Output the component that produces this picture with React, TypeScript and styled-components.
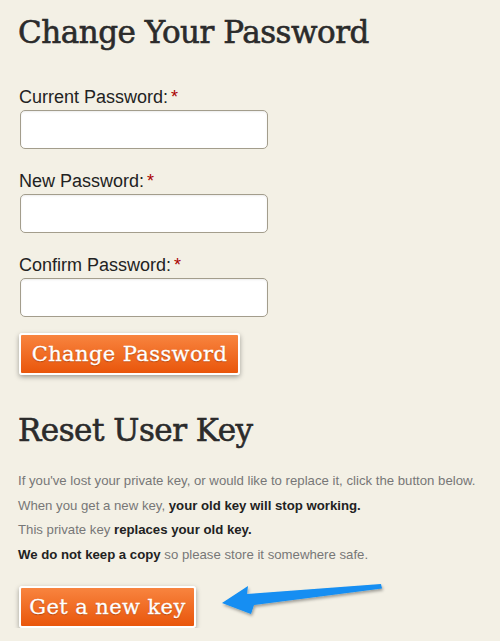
import styled, { createGlobalStyle } from 'styled-components';

const GlobalStyle = createGlobalStyle`
  html, body {
    margin: 0;
    padding: 0;
    background: #f3f0e5;
  }
`;

const Page = styled.div`
  padding: 12px 0 0 18px;
  font-family: 'Liberation Sans', Arial, sans-serif;
  color: #222;
`;

const Heading = styled.h1<{ $top?: number }>`
  font-family: 'DejaVu Serif', serif;
  font-weight: normal;
  font-size: 31px;
  letter-spacing: -0.5px;
  color: #2b2b2b;
  -webkit-text-stroke: 0.6px #2b2b2b;
  line-height: 40px;
  margin: ${(p) => p.$top ?? 0}px 0 0 0;
`;

const Form = styled.form`
  display: flex;
  flex-direction: column;
  margin-top: 35px;
`;

const Field = styled.div`
  display: flex;
  flex-direction: column;
  margin-bottom: 22px;
`;

const Label = styled.label`
  font-size: 18px;
  line-height: 20px;
  color: #222;
  padding-left: 1px;
  margin-bottom: 3px;
`;

const Star = styled.span`
  color: #a00;
  margin-left: 3px;
`;

const Input = styled.input`
  box-sizing: border-box;
  width: 248px;
  height: 39px;
  margin-left: 2px;
  border: 1px solid #a39d8c;
  border-radius: 5px;
  background: #fff;
  box-shadow: inset 0 1px 2px rgba(0, 0, 0, 0.08);
  outline: none;
`;

const OrangeButton = styled.button<{ $width: number }>`
  box-sizing: border-box;
  width: ${(p) => p.$width}px;
  height: 42px;
  margin-left: 1px;
  border: 2px solid #fff;
  border-radius: 3px;
  background: linear-gradient(to bottom, #f8843f 0%, #e9560b 100%);
  box-shadow: 0 2px 5px rgba(0, 0, 0, 0.35);
  color: #fff;
  -webkit-text-stroke: 0.3px #fff;
  font-family: 'DejaVu Serif', serif;
  font-size: 21px;
  letter-spacing: 0.4px;
  text-shadow: 0 1px 1px rgba(120, 40, 0, 0.5);
  padding: 0;
  cursor: pointer;
`;

const Text = styled.p`
  margin: 0;
  font-size: 13.2px;
  line-height: 24.5px;
  color: #777;
  b {
    color: #222;
  }
`;

const TextBlock = styled.div`
  margin-top: 19px;
`;

const ActionRow = styled.div`
  display: flex;
  align-items: center;
  gap: 20px;
  margin-top: 19px;
`;

const ArrowSvg = styled.svg`
  margin-top: -10px;
`;

function Arrow() {
  return (
    <ArrowSvg width="175" height="44" viewBox="0 0 175 44" aria-hidden="true">
      <defs>
        <filter id="sh" x="-10%" y="-30%" width="130%" height="180%">
          <feDropShadow dx="1" dy="2" stdDeviation="1.5" floodColor="#000" floodOpacity="0.35" />
        </filter>
      </defs>
      <path
        d="M6 23 L32 6 L31 14 L165 4 L166 8.5 L38 25 L35 34 Z"
        fill="#138ef2"
        filter="url(#sh)"
      />
    </ArrowSvg>
  );
}

export default function App() {
  return (
    <>
      <GlobalStyle />
      <Page>
        <Heading>Change Your Password</Heading>
        <Form onSubmit={(e) => e.preventDefault()}>
          <Field>
            <Label htmlFor="cur">
              Current Password:<Star>*</Star>
            </Label>
            <Input id="cur" type="password" />
          </Field>
          <Field>
            <Label htmlFor="new">
              New Password:<Star>*</Star>
            </Label>
            <Input id="new" type="password" />
          </Field>
          <Field>
            <Label htmlFor="conf">
              Confirm Password:<Star>*</Star>
            </Label>
            <Input id="conf" type="password" />
          </Field>
          <OrangeButton $width={221} style={{ marginTop: -6 }}>
            Change Password
          </OrangeButton>
        </Form>
        <Heading $top={35}>Reset User Key</Heading>
        <TextBlock>
          <Text>If you've lost your private key, or would like to replace it, click the button below.</Text>
          <Text>
            When you get a new key, <b>your old key will stop working.</b>
          </Text>
          <Text>
            This private key <b>replaces your old key.</b>
          </Text>
          <Text>
            <b>We do not keep a copy</b> so please store it somewhere safe.
          </Text>
        </TextBlock>
        <ActionRow>
          <OrangeButton $width={177}>Get a new key</OrangeButton>
          <Arrow />
        </ActionRow>
      </Page>
    </>
  );
}
